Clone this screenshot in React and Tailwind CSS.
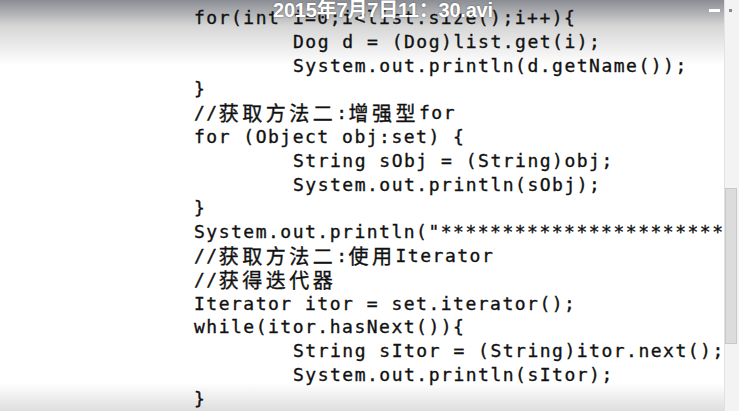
import React from 'react';

// CJK runs are wider and a bit larger than the latin glyphs
const Cn = ({ children }) => (
  <span className="font-['Noto_Sans_CJK_SC',sans-serif] text-[20px] leading-none tracking-[3.5px]">{children}</span>
);

const lines = [
  { indent: 0, text: 'for(int i=0;i<list.size();i++){' },
  { indent: 1, text: 'Dog d = (Dog)list.get(i);' },
  { indent: 1, text: 'System.out.println(d.getName());' },
  { indent: 0, text: '}' },
  { indent: 0, parts: ['//', { cn: '获取方法二' }, ':', { cn: '增强型' }, 'for'] },
  { indent: 0, text: 'for (Object obj:set) {' },
  { indent: 1, text: 'String sObj = (String)obj;' },
  { indent: 1, text: 'System.out.println(sObj);' },
  { indent: 0, text: '}' },
  { indent: 0, text: 'System.out.println("****************************' },
  { indent: 0, parts: ['//', { cn: '获取方法二' }, ':', { cn: '使用' }, 'Iterator'] },
  { indent: 0, parts: ['//', { cn: '获得迭代器' }] },
  { indent: 0, text: 'Iterator itor = set.iterator();' },
  { indent: 0, text: 'while(itor.hasNext()){' },
  { indent: 1, text: 'String sItor = (String)itor.next();' },
  { indent: 1, text: 'System.out.println(sItor);' },
  { indent: 0, text: '}' },
];

export default function App() {
  return (
    <div className="relative w-[739px] h-[411px] overflow-hidden bg-white flex">
      {/* fades from the video frame */}
      <div className="absolute inset-x-0 top-0 h-[65px] bg-gradient-to-b from-[#8a8d93] via-[#d6d6d6] via-40% to-transparent pointer-events-none" />
      <div className="absolute inset-x-0 bottom-0 h-[28px] bg-gradient-to-t from-[#dedede] to-transparent pointer-events-none" />

      {/* code area */}
      <div className="relative flex-1 overflow-hidden pl-[194px] pt-[6px]">
        <div className="flex flex-col font-['DejaVu_Sans_Mono',monospace] text-[18px] leading-[23.8px] tracking-[1.5px] text-[#111] whitespace-pre [-webkit-text-stroke:0.35px_#111]">
          {lines.map((l, i) => (
            <div key={i} className={`h-[23.8px] flex items-center ${l.indent ? 'pl-[99px]' : ''}`}>
              {l.text
                ? l.text
                : l.parts.map((p, j) => (typeof p === 'string' ? <span key={j}>{p}</span> : <Cn key={j}>{p.cn}</Cn>))}
            </div>
          ))}
        </div>
      </div>

      {/* scrollbar */}
      <div className="relative flex flex-col w-[15px] shrink-0 bg-[#f3f3f3] border-l border-[#e2e2e2] pt-[188px]">
        <div className="mr-[2px] h-[156px] bg-[#dcdcdc] border border-[#c8c8c8]" />
      </div>

      {/* video title overlay */}
      <div className="absolute inset-x-0 top-0 flex items-start h-[20px] pl-[273px] pr-[7px]">
        <div className="-mt-[5px] font-['Liberation_Sans','Noto_Sans_CJK_SC',sans-serif] text-[20px] font-bold text-white tracking-[-0.2px] [text-shadow:0_0_2px_#555]">
          2015年7月7日11：30.avi
        </div>
        <div className="ml-auto mt-[9px] w-[11px] h-[3px] bg-white" />
        <div className="ml-[9px] mt-[9px] w-[3px] h-[3px] bg-[#888]" />
      </div>
    </div>
  );
}
